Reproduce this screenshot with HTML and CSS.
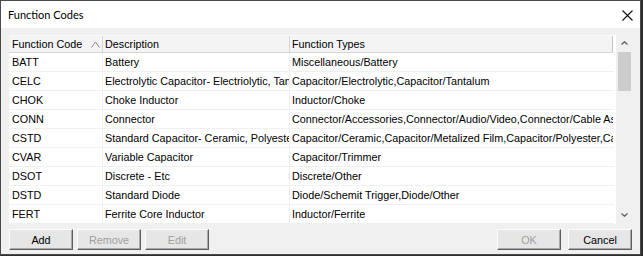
FILE: index.html
```html
<!DOCTYPE html>
<html lang="en">
<head>
    <meta charset="UTF-8">
    <title>Function Codes</title>
    <link rel="stylesheet" href="styles.css">
</head>
<body>
    <div class="window">
        <div class="titlebar">
            <span class="title">Function Codes</span>
            <svg class="close" width="11" height="11" viewBox="0 0 11 11">
                <path d="M0.5 0.5 L10.5 10.5 M10.5 0.5 L0.5 10.5" stroke="#111" stroke-width="1.1" fill="none"/>
            </svg>
        </div>
        <div class="content">
            <div class="list">
                <div class="grid">
                    <div class="row header">
                        <div class="cell c1"><span>Function Code</span><svg class="sort" width="9" height="7" viewBox="0 0 9 7"><path d="M0.5 6.5 L4.5 1 L8.5 6.5" stroke="#8a8a8a" fill="none"/></svg></div>
                        <div class="cell c2"><span>Description</span></div>
                        <div class="cell c3"><span>Function Types</span></div>
                    </div>
                    <div class="row">
                        <div class="cell c1"><span>BATT</span></div>
                        <div class="cell c2"><span>Battery</span></div>
                        <div class="cell c3"><span>Miscellaneous/Battery</span></div>
                    </div>
                    <div class="row">
                        <div class="cell c1"><span>CELC</span></div>
                        <div class="cell c2"><span>Electrolytic Capacitor- Electriolytic, Tantalum</span></div>
                        <div class="cell c3"><span>Capacitor/Electrolytic,Capacitor/Tantalum</span></div>
                    </div>
                    <div class="row">
                        <div class="cell c1"><span>CHOK</span></div>
                        <div class="cell c2"><span>Choke Inductor</span></div>
                        <div class="cell c3"><span>Inductor/Choke</span></div>
                    </div>
                    <div class="row">
                        <div class="cell c1"><span>CONN</span></div>
                        <div class="cell c2"><span>Connector</span></div>
                        <div class="cell c3"><span>Connector/Accessories,Connector/Audio/Video,Connector/Cable Assembly</span></div>
                    </div>
                    <div class="row">
                        <div class="cell c1"><span>CSTD</span></div>
                        <div class="cell c2"><span>Standard Capacitor- Ceramic, Polyester, Film</span></div>
                        <div class="cell c3"><span>Capacitor/Ceramic,Capacitor/Metalized Film,Capacitor/Polyester,Capacitor/Film</span></div>
                    </div>
                    <div class="row">
                        <div class="cell c1"><span>CVAR</span></div>
                        <div class="cell c2"><span>Variable Capacitor</span></div>
                        <div class="cell c3"><span>Capacitor/Trimmer</span></div>
                    </div>
                    <div class="row">
                        <div class="cell c1"><span>DSOT</span></div>
                        <div class="cell c2"><span>Discrete - Etc</span></div>
                        <div class="cell c3"><span>Discrete/Other</span></div>
                    </div>
                    <div class="row">
                        <div class="cell c1"><span>DSTD</span></div>
                        <div class="cell c2"><span>Standard Diode</span></div>
                        <div class="cell c3"><span>Diode/Schemit Trigger,Diode/Other</span></div>
                    </div>
                    <div class="row">
                        <div class="cell c1"><span>FERT</span></div>
                        <div class="cell c2"><span>Ferrite Core Inductor</span></div>
                        <div class="cell c3"><span>Inductor/Ferrite</span></div>
                    </div>
                </div>
                <div class="scrollbar">
                    <svg class="arrow" width="7" height="4" viewBox="0 0 7 4"><path d="M0.5 3.5 L3.5 0.8 L6.5 3.5" stroke="#606060" stroke-width="1.3" fill="none"/></svg>
                    <div class="thumb"></div>
                    <div class="track"></div>
                    <svg class="arrow" width="7" height="4" viewBox="0 0 7 4"><path d="M0.5 0.5 L3.5 3.2 L6.5 0.5" stroke="#606060" stroke-width="1.3" fill="none"/></svg>
                </div>
            </div>
            <div class="buttons">
                <div class="group">
                    <button class="btn">Add</button>
                    <button class="btn" disabled>Remove</button>
                    <button class="btn" disabled>Edit</button>
                </div>
                <div class="group right">
                    <button class="btn" disabled>OK</button>
                    <button class="btn">Cancel</button>
                </div>
            </div>
        </div>
    </div>
</body>
</html>
```

FILE: styles.css
```css
body {
    margin: 0;
    background-color: #2e2e2e;
    font-family: "Liberation Sans", Arial, sans-serif;
}
.window {
    box-sizing: border-box;
    width: 641px;
    height: 255px;
    border: 1px solid #4a4a4a;
    background-color: #f0f0f0;
    display: flex;
    flex-direction: column;
}
.titlebar {
    height: 27px;
    background-color: #fff;
    display: flex;
    align-items: center;
    justify-content: space-between;
    padding-left: 7px;
    padding-right: 7px;
}
.title {
    font-family: Lato, sans-serif;
    font-size: 11px;
    color: #000;
}
.close {
    margin-top: 1px;
}
.content {
    flex: 1;
    display: flex;
    flex-direction: column;
    padding: 7px 7px 4px 8px;
}
.list {
    height: 189px;
    display: flex;
    background-color: #fff;
    overflow: hidden;
}
.grid {
    flex: 1;
    overflow: hidden;
}
.row {
    display: flex;
    height: 18px;
    border-bottom: 1px solid #f0f0f0;
    font-size: 10.8px;
    color: #000;
}
.cell {
    box-sizing: border-box;
    display: flex;
    align-items: center;
    white-space: nowrap;
    overflow: hidden;
    border-right: 1px solid #f0f0f0;
}
.c1 {
    width: 94px;
    padding-left: 3px;
}
.c2 {
    width: 187px;
    padding-left: 2px;
}
.c3 {
    width: 323px;
    padding-left: 2px;
    border-right: none;
}
.header {
    height: 16px;
    background-color: #f4f4f4;
    border-top: 1px solid #f9f9f9;
    border-bottom: 1px solid #d5d5d5;
    width: 604px;
}
.header .cell {
    border-right: 1px solid #d5d5d5;
}
.header .c3 {
    border-right: 1px solid #c4c4c4;
}
.sort {
    margin-left: 9px;
}
.scrollbar {
    width: 17px;
    margin-left: 2px;
    background-color: #f0f0f0;
    display: flex;
    flex-direction: column;
    align-items: center;
}
.arrow {
    margin: 6px 0 7px;
}
.thumb {
    width: 13px;
    height: 39px;
    background-color: #cdcdcd;
}
.track {
    flex: 1;
}
.buttons {
    display: flex;
    justify-content: space-between;
    margin-top: 5px;
}
.group {
    display: flex;
    gap: 4px;
}
.group.right {
    gap: 7px;
    margin-right: 1px;
}
.btn {
    box-sizing: border-box;
    width: 64px;
    height: 21px;
    padding: 0;
    font-family: "Liberation Sans", Arial, sans-serif;
    font-size: 10.8px;
    color: #000;
    background-color: #e6e6e6;
    border: 1px solid;
    border-color: #fcfcfc #5e5e5e #5e5e5e #fcfcfc;
    box-shadow: inset -1px -1px #a8a8a8;
}
.btn:disabled {
    color: #a0a0a0;
}
```
